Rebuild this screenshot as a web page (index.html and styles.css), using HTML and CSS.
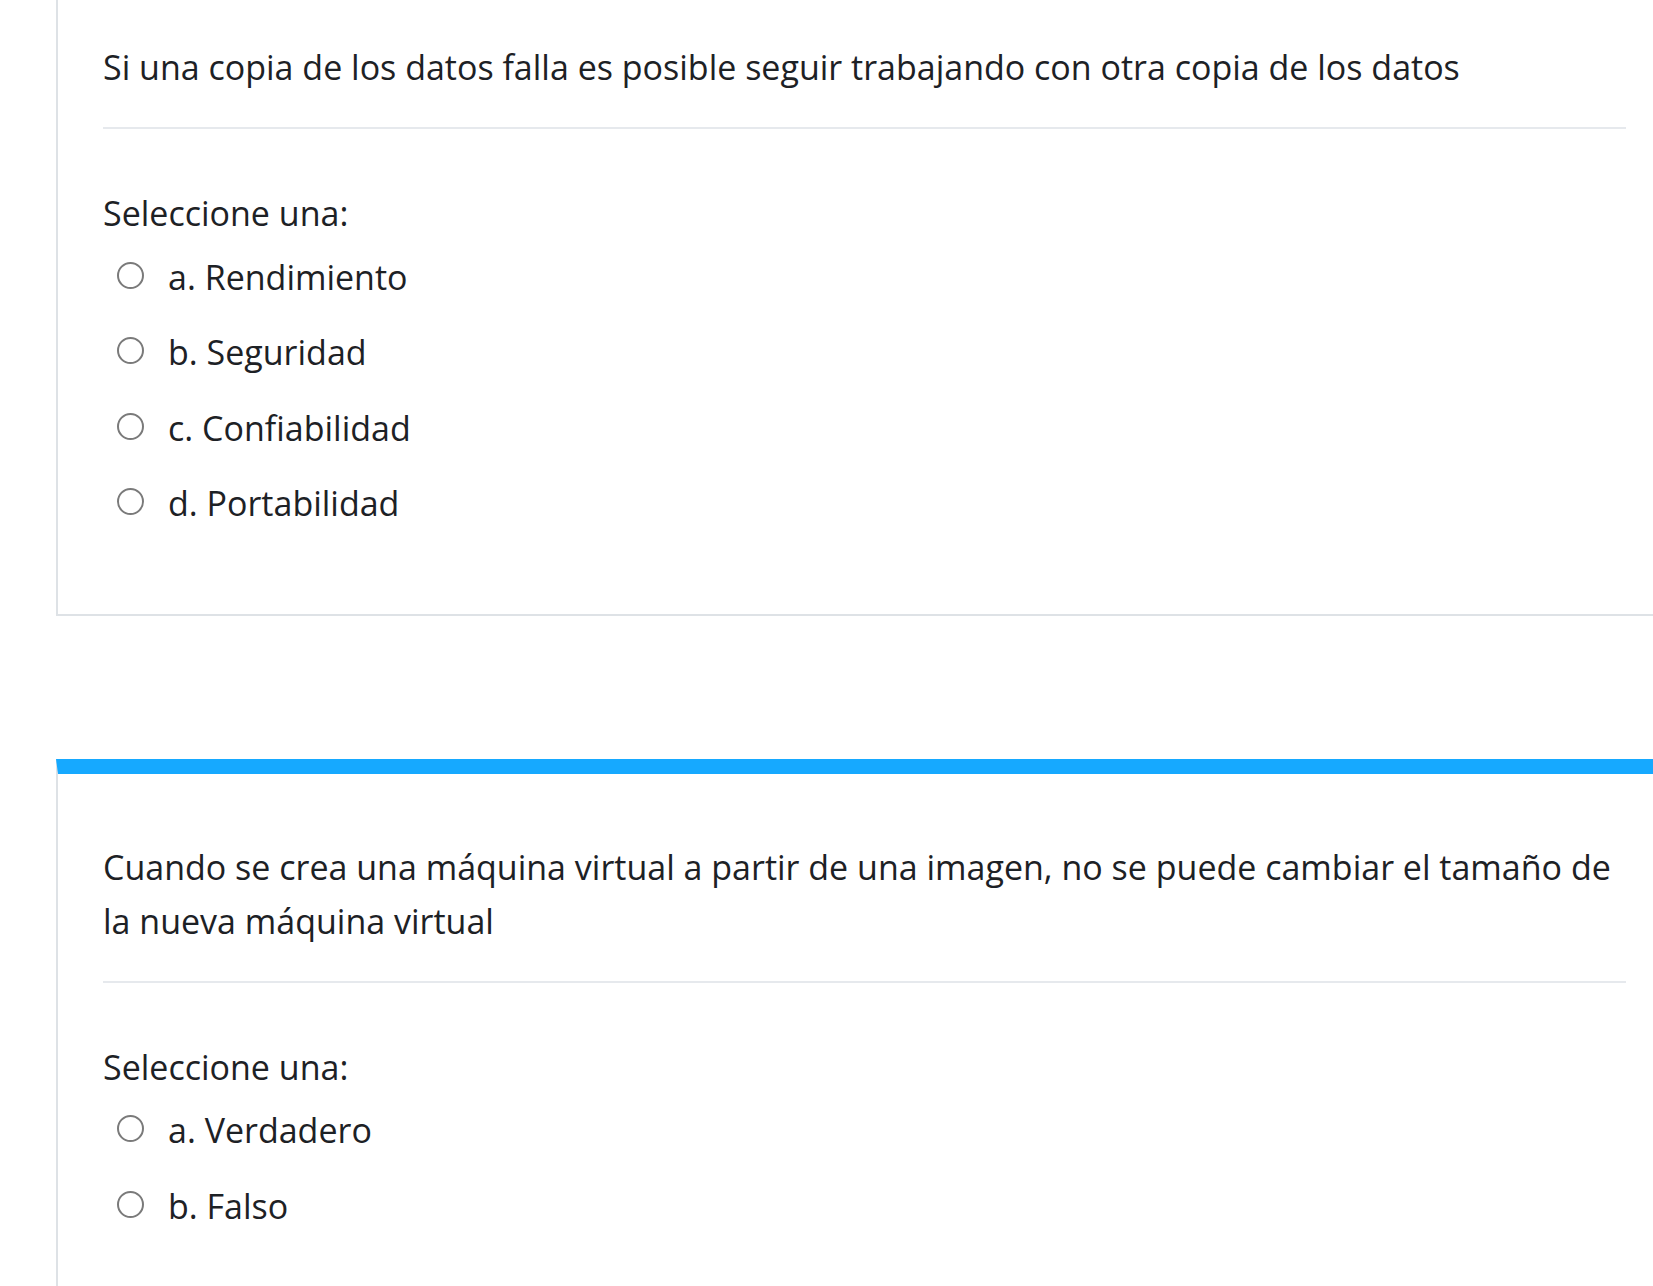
FILE: index.html
```html
<!DOCTYPE html>
<html lang="es">
<head>
<meta charset="utf-8">
<title>Cuestionario</title>
<link rel="stylesheet" href="styles.css">
</head>
<body>
<div class="page">
  <div class="que">
    <div class="qtext">Si una copia de los datos falla es posible seguir trabajando con otra copia de los datos</div>
    <div class="prompt">Seleccione una:</div>
    <div class="answer">
      <label class="opt"><input type="radio" name="q1"><span>a. Rendimiento</span></label>
      <label class="opt"><input type="radio" name="q1"><span>b. Seguridad</span></label>
      <label class="opt"><input type="radio" name="q1"><span>c. Confiabilidad</span></label>
      <label class="opt"><input type="radio" name="q1"><span>d. Portabilidad</span></label>
    </div>
  </div>
  <div class="que">
    <div class="qtext">Cuando se crea una máquina virtual a partir de una imagen, no se puede cambiar el tamaño de la nueva máquina virtual</div>
    <div class="prompt">Seleccione una:</div>
    <div class="answer">
      <label class="opt"><input type="radio" name="q2"><span>a. Verdadero</span></label>
      <label class="opt"><input type="radio" name="q2"><span>b. Falso</span></label>
    </div>
  </div>
</div>
</body>
</html>
```
FILE: styles.css
```css
html, body {
  margin: 0;
  padding: 0;
  background: #ffffff;
  overflow: hidden;
}

body {
  font-family: "Open Sans", "Noto Sans", "DejaVu Sans", sans-serif;
  color: #1d2125;
}

.page {
  margin-top: -41px;
  padding-left: 56px;
}

.que {
  width: 1615px;
  box-sizing: border-box;
  border-left: 2px solid #dee2e6;
  border-top: 15px solid #16a9ff;
  border-bottom: 2px solid #dee2e6;
  padding: 66px 45px 74px 45px;
  margin-bottom: 143px;
}

.qtext {
  font-size: 34px;
  line-height: 54px;
  padding-bottom: 33px;
  border-bottom: 2px solid #e6e9ed;
}

.prompt {
  margin-top: 60px;
  font-size: 34px;
  line-height: 48.5px;
}

.answer {
  display: flex;
  flex-direction: column;
}

.opt {
  display: flex;
  align-items: center;
  height: 75.5px;
  padding-left: 14px;
  font-size: 34px;
}

.opt span {
  padding-top: 3px;
}

.opt input {
  appearance: none;
  -webkit-appearance: none;
  box-sizing: border-box;
  width: 27px;
  height: 27px;
  margin: 0 24px 0 0;
  border: 2px solid #7a7a7a;
  border-radius: 50%;
  background: #ffffff;
  flex: none;
}
```
